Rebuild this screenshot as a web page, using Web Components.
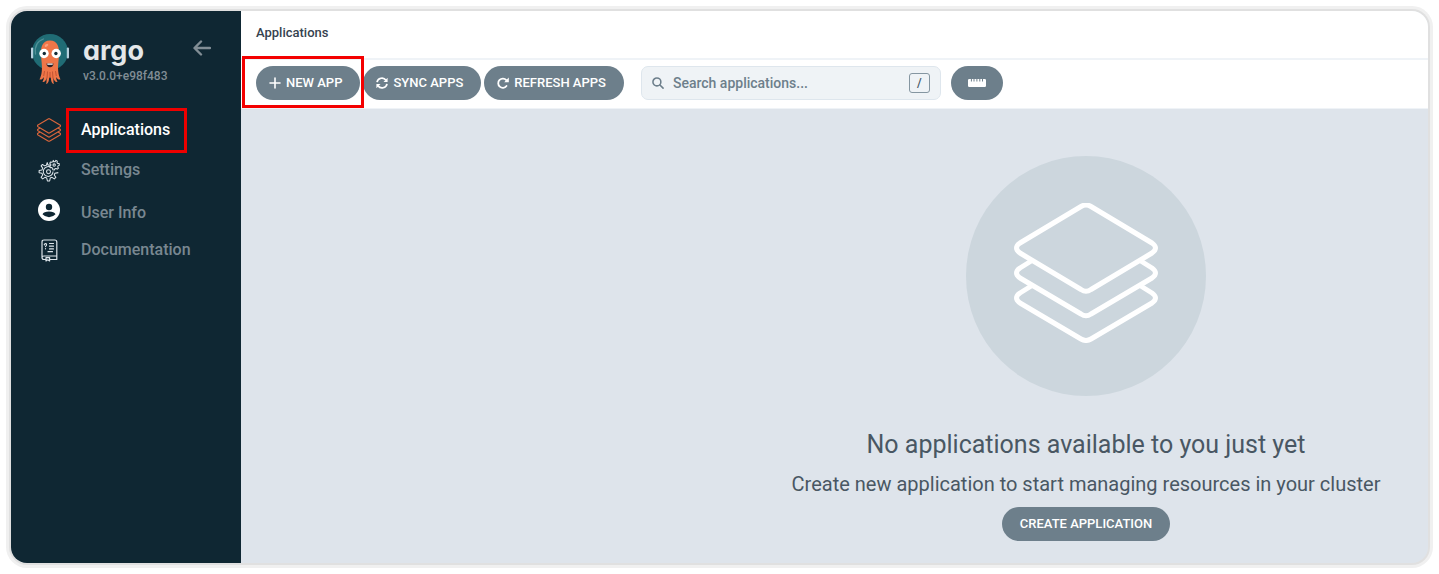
<!DOCTYPE html>
<html lang="en">
<head>
<meta charset="utf-8">
<title>Applications - Argo CD</title>
<style>
html, body { height: 100%; }
body { margin: 0; background: #fff; font-family: Roboto, "Liberation Sans", sans-serif; }
</style>
</head>
<body>
<argo-app></argo-app>
<script>
const ICONS = {
  plus: '<svg viewBox="0 0 12 12" width="12" height="12"><path d="M6 1v10M1 6h10" fill="none" stroke="currentColor" stroke-width="1.6" stroke-linecap="round"/></svg>',
  sync: '<svg viewBox="0 0 12 12" width="12" height="12"><g fill="none" stroke="currentColor" stroke-width="1.7"><path d="M1 5.2A5 5 0 0 1 10 3.2"/><path d="M11 6.8A5 5 0 0 1 2 8.8"/></g><path d="M11.6.8v4.1H7.5zM.4 11.2V7.1h4.1z" fill="currentColor"/></svg>',
  refresh: '<svg viewBox="0 0 12 12" width="12" height="12"><path d="M9.3 3.2A4.6 4.6 0 1 0 9.5 9" fill="none" stroke="currentColor" stroke-width="1.8" stroke-linecap="round"/><path d="M11.8.6v4.6H7.2z" fill="currentColor"/></svg>',
  ruler: '<svg viewBox="0 0 18 8" width="18" height="8"><path d="M1.2 0H2.9v2.5h1V0h1.6v2.5h1V0h1.9v2.5h1V0h1.9v2.5h1V0h1.7v2.5h1V0h1.8Q18 0 18 1.2v5.6Q18 8 16.8 8H1.2Q0 8 0 6.8V1.2Q0 0 1.2 0z" fill="currentColor"/></svg>',
  search: '<svg viewBox="0 0 13 13" width="12" height="12"><g fill="none" stroke="currentColor" stroke-width="1.7" stroke-linecap="round"><circle cx="5.3" cy="5.3" r="4.3"/><path d="M8.6 8.6 12 12"/></g></svg>',
  back: '<svg viewBox="0 0 18 16" width="18" height="16"><path d="M8 1.5 1.5 8 8 14.5M2 8h15" fill="none" stroke="currentColor" stroke-width="2.4" stroke-linecap="round" stroke-linejoin="round"/></svg>',
  layers: '<svg viewBox="0 0 144 140" width="100%" height="100%"><g fill="none" stroke="currentColor" stroke-width="var(--layer-stroke, 5)" stroke-linejoin="round"><path d="M67 3.5Q72 .5 77 3.5L138 40Q145 45 138 50L77 86.5Q72 90 67 86.5L6 50Q-1 45 6 40Z"/><path d="M18 57.5 6 65Q-1 70 6 75L67 111Q72 114.5 77 111L138 75Q145 70 138 65L126 57.5"/><path d="M18 82.5 6 90Q-1 95 6 100L67 136Q72 139 77 136L138 100Q145 95 138 90L126 82.5"/></g></svg>',
  gear: '<svg viewBox="0 0 24 24" width="24" height="24"><g fill="none" stroke="currentColor" stroke-width="1.1" stroke-linejoin="round" transform="translate(1 1) scale(.94)"><circle cx="11.2" cy="13.6" r="2.1"/><path d="M13 6.5 10.5 6.3 9.8 3.8 8.9 6.6 7.2 7.3 4.7 5.8 3.3 7.3 5 9.7 4.2 11.7 1.2 12.2V14.6L4.2 15.2 5 17.1 3.3 19.5 5 21.2 7.4 19.5 9.3 20.3 10 23.3H12.4L13 20.3 14.9 19.5 17.3 21.2 19 19.5 17.3 17 18 15.2 21.6 14.5"/><path d="M13.4 8.8A5.2 5.2 0 1 0 16 13.2"/><circle cx="17.2" cy="6.5" r="1.3"/><path d="m16.3 1.5.5 1.4 1.4-.1.9-1.3 1.5.8-.4 1.5.8 1 1.5.1.2 1.7-1.4.7-.3 1.2.8 1.3-1.3 1-1.3-.8-1.2.4-.7 1.4-1.6-.4v-1.5l-1-.8-1.5.3-.8-1.5 1.2-1.1v-1.2l-1.1-1 .8-1.5 1.6.3.9-.7z"/></g></svg>',
  user: '<svg viewBox="0 0 24 24" width="24" height="24"><circle cx="12" cy="12" r="11" fill="#fff"/><circle cx="12" cy="9" r="3.2" fill="#0f2733"/><path d="M5.5 16.3Q6.8 13.5 12 13.5t6.5 2.8Q16 19.2 12 19.2t-6.5-2.9z" fill="#0f2733"/></svg>',
  book: '<svg viewBox="0 0 24 24" width="24" height="24"><g fill="none" stroke="currentColor" stroke-width="1.2" stroke-linecap="round" stroke-linejoin="round"><path d="M9 21.5H7Q5 21.5 5 19.5V4Q5 2 7 2H17.8Q19.8 2 19.8 4V18H7Q5 18 5 19.8M19.8 18V21.5H13"/><path d="M9 19.6V22.9L10.8 21.8 12.6 22.9V19.6zM7.3 6.8Q7.5 5.5 8.7 5.7T9.3 7.5L8.5 8.5M8.5 10.5v.3M12.5 5.5h4M12.5 8.2h4M12.5 10.9h4M11 13.7h4.5"/></g></svg>',
  octopus: '<svg viewBox="0 0 40 52" width="40" height="52"><circle cx="20" cy="19" r="18" fill="#206c75"/><path d="M5.5 21Q4 9 13.5 6" fill="none" stroke="#4f9197" stroke-width="1.3" stroke-linecap="round"/><rect x="1" y="14.5" width="2.2" height="11" rx="1" fill="#b6d0dd"/><rect x="36.8" y="14.5" width="2.2" height="11" rx="1" fill="#b6d0dd"/><path d="M20 7.5C12 7.5 10.7 15 11 21c.2 7 1.5 12 .8 17-.4 4-1.2 6-2.3 8.5 2.2.5 3.5-.8 4.5-2.5-.3 2-.7 3.5-1.5 5 2.5.3 3.5-1.5 4-4.5.2 3 .1 5-.4 6.500 2.300-.3 2.900-3.500 3.100-6.500h1.600c.2 3 .8 6.200 3.100 6.500-.5-1.500-.6-3.500-.4-6.500.5 3 1.500 4.800 4 4.500-.8-1.500-1.200-3-1.500-5 1 1.700 2.300 3 4.500 2.500-1.100-2.500-1.900-4.500-2.300-8.500-.7-5 .6-10 .8-17 .3-6-1-13.500-9-13.500z" fill="#ef7648"/><path d="M14.5 38l-.8 5M17.5 38.5l-.5 7M20 39v6M22.5 38.5l.5 7M25.5 38l.8 5" stroke="#bd4f31" stroke-width=".9"/><ellipse cx="16.5" cy="12.3" rx="2" ry="1.3" fill="#f6a07c" transform="rotate(-35 16.5 12.3)"/><circle cx="14" cy="20.5" r="4.7" fill="#fff"/><circle cx="26.2" cy="20.5" r="4.7" fill="#fff"/><circle cx="14.3" cy="20.5" r="1.7" fill="#142b36"/><circle cx="25.9" cy="20.5" r="1.7" fill="#142b36"/><path d="M16.5 30.5h7q-.3 3.8-3.5 3.8t-3.5-3.8z" fill="#2a2026"/><path d="M17.3 30.5h5.4v1.2h-5.4z" fill="#fff"/></svg>'
};

function define(name, render) {
  customElements.define(name, class extends HTMLElement {
    connectedCallback() {
      if (this.shadowRoot) return;
      const t = document.createElement('template');
      t.innerHTML = render(this);
      this.attachShadow({ mode: 'open' }).append(t.content.cloneNode(true));
    }
  });
}

define('argo-icon', el => `
  <style>:host { display: inline-flex; flex: none; } svg { display: block; }</style>
  ${ICONS[el.getAttribute('name')]}`);

define('argo-button', el => `
  <style>
    :host { display: block; position: relative; flex: none; }
    button { display: flex; align-items: center; justify-content: center; gap: 5px; height: 34px; border: 0; border-radius: 17px;
      margin: 0; padding: 0 18px; background: #6d7f8b; color: #fff; font: 500 13px/34px Roboto, sans-serif; text-transform: uppercase;
      white-space: nowrap; cursor: pointer; }
    :host([icon]) button { padding-left: 13px; }
    :host([icon-only]) button { padding: 0 17px; }
    :host([highlight]) { z-index: 1; }
    :host([highlight])::after { content: ""; position: absolute; inset: -10px -4px -8px -14px; border: 3px solid #f40000; pointer-events: none; }
  </style>
  <button type="button" ${el.hasAttribute('icon-only') ? `aria-label="${el.getAttribute('icon-only')}"` : ''}>
    ${el.hasAttribute('icon') ? `<argo-icon name="${el.getAttribute('icon')}"></argo-icon>` : ''}<slot></slot>
  </button>`);

define('argo-nav-item', el => `
  <style>
    :host { display: block; }
    a { display: flex; align-items: center; height: 40px; padding-left: 26px; color: #798791; text-decoration: none;
      font-size: 16px; font-weight: 500; line-height: 20px; }
    argo-icon { width: 24px; height: 24px; margin-right: 20px; color: #dde5ea; }
    :host([active]) a { color: #fff; }
    :host([active]) argo-icon { color: #d9653b; --layer-stroke: 7; }
    :host([icon="user"]) span { padding-top: 6px; }
    span { position: relative; }
    :host([active]) span::after { content: ""; position: absolute; inset: -12px -17px -13px -15px; border: 3px solid #ee0000; pointer-events: none; }
  </style>
  <a href="#${el.getAttribute('icon')}"><argo-icon name="${el.getAttribute('icon')}"></argo-icon><span><slot></slot></span></a>`);

define('argo-sidebar', () => `
  <style>
    :host { display: block; flex: none; width: 230px; background: #0f2733; }
    header { display: flex; padding: 22px 30px 0 19px; height: 77px; }
    .brand { flex: 1; padding-left: 13px; }
    .logo { font: 700 27px/36px Inter, sans-serif; font-feature-settings: "cv11"; color: #e4e7e9; }
    .version { color: #818d95; font-size: 12px; font-weight: 500; line-height: 14px; }
    button { align-self: flex-start; margin: 7px 0 0; padding: 0; border: 0; background: none; color: #818d95; cursor: pointer; }
  </style>
  <header>
    <argo-icon name="octopus"></argo-icon>
    <div class="brand"><div class="logo">argo</div><div class="version">v3.0.0+e98f483</div></div>
    <button type="button" aria-label="Collapse sidebar"><argo-icon name="back"></argo-icon></button>
  </header>
  <nav>
    <argo-nav-item icon="layers" active>Applications</argo-nav-item>
    <argo-nav-item icon="gear">Settings</argo-nav-item>
    <argo-nav-item icon="user">User Info</argo-nav-item>
    <argo-nav-item icon="book">Documentation</argo-nav-item>
  </nav>`);

define('argo-search', () => `
  <style>
    :host { display: block; flex: 0 1 300px; margin: 0 10px 0 17px; }
    label { display: flex; align-items: center; box-sizing: border-box; height: 34px; padding: 0 10px; border: 1px solid #dee6ed; border-radius: 7px; background: #eff3f6; color: #6d7f8b; }
    input { flex: 1; min-width: 0; margin: 0 0 0 9px; padding: 0; border: 0; outline: 0; background: none; color: inherit; font: 500 14px/20px Roboto, sans-serif; }
    input::placeholder { color: #6d7f8b; opacity: 1; }
    kbd { box-sizing: border-box; width: 21px; height: 20px; border: 1px solid #8596a1; border-radius: 3px; color: #485965; font: 500 12px/18px Roboto, sans-serif; text-align: center; }
  </style>
  <label><argo-icon name="search"></argo-icon><input type="text" aria-label="Search applications" placeholder="Search applications..."><kbd>/</kbd></label>`);

define('argo-toolbar', () => `
  <style>
    :host { display: block; background: #fff; }
    h1 { margin: 0; height: 47px; padding: 0 15px; border-bottom: 2px solid #eff3f7; color: #36424f; font-size: 13px; font-weight: 500; line-height: 44px; }
    .bar { display: flex; align-items: center; height: 46px; padding: 0 15px 2px; border-bottom: 1px solid #eff3f7; }
    .actions { display: flex; gap: 3px; }
  </style>
  <h1>Applications</h1>
  <div class="bar">
    <div class="actions">
      <argo-button icon="plus" highlight>New App</argo-button>
      <argo-button icon="sync">Sync Apps</argo-button>
      <argo-button icon="refresh">Refresh Apps</argo-button>
    </div>
    <argo-search></argo-search>
    <argo-button icon="ruler" icon-only="Toggle health bar"></argo-button>
  </div>`);

define('argo-empty-state', () => `
  <style>
    :host { display: flex; flex-direction: column; align-items: center; padding: 47px 0 22px 503px; color: #495763; text-align: center; }
    .disc { display: flex; align-items: center; justify-content: center; width: 240px; height: 240px; border-radius: 50%; background: #ccd6dd; color: #fff; }
    .disc argo-icon { width: 144px; height: 140px; margin-bottom: 6px; }
    h2 { margin: 31px 0 0; font-size: 25px; font-weight: 400; line-height: 36px; white-space: nowrap; }
    p { margin: 7px 0 9px; font-size: 20px; font-weight: 400; line-height: 28px; white-space: nowrap; }
  </style>
  <div class="disc"><argo-icon name="layers"></argo-icon></div>
  <h2>No applications available to you just yet</h2>
  <p>Create new application to start managing resources in your cluster</p>
  <argo-button>Create application</argo-button>`);

define('argo-app', () => `
  <style>
    :host { display: flex; box-sizing: border-box; min-height: 100%; padding: 11px; }
    .window { display: flex; flex: 1; min-width: 0; border-radius: 16px; overflow: hidden; background: #dee4eb; box-shadow: 0 0 0 2px #e0e0e0, 0 0 0 5px #f0f0f0; }
    main { flex: 1; min-width: 0; }
  </style>
  <div class="window">
    <argo-sidebar></argo-sidebar>
    <main><argo-toolbar></argo-toolbar><argo-empty-state></argo-empty-state></main>
  </div>`);
</script>
</body>
</html>
